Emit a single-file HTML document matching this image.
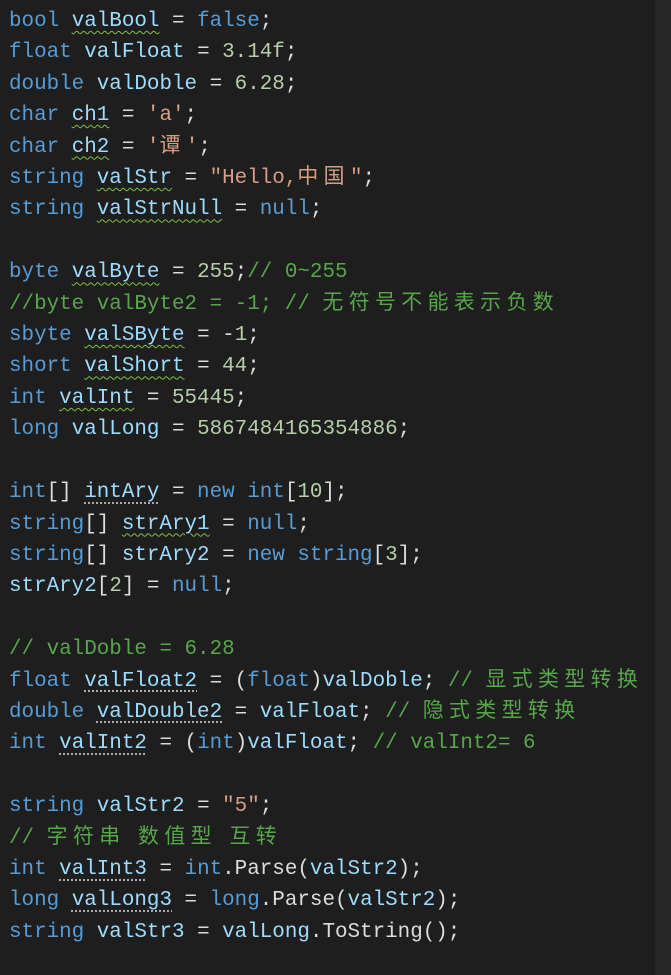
<!DOCTYPE html>
<html><head><meta charset="utf-8"><style>
html,body{margin:0;padding:0;background:#1e1e1e;width:671px;height:975px;overflow:hidden}
pre{position:absolute;left:9px;top:6px;margin:0;font-family:"Liberation Mono","Noto Sans CJK SC",monospace;font-size:20.9px;line-height:31.4px;color:#dcdcdc}
.k{color:#569cd6}.v{color:#9cdcfe}.s{color:#d69d85}.n{color:#b5cea8}.c{color:#57a64a}
.w{text-decoration:underline wavy #7fbf3f;text-decoration-thickness:1px;text-underline-offset:4px}
.d{text-decoration:underline dotted #aaa;text-underline-offset:5px}
.z{letter-spacing:5.4px}
.edge{position:absolute;right:0;top:0;width:16px;height:975px;background:#262626}
</style></head><body>
<div class="edge"></div>
<pre><span class="k">bool</span> <span class="v w">valBool</span> = <span class="k">false</span>;
<span class="k">float</span> <span class="v">valFloat</span> = <span class="n">3.14f</span>;
<span class="k">double</span> <span class="v">valDoble</span> = <span class="n">6.28</span>;
<span class="k">char</span> <span class="v w">ch1</span> = <span class="s">'a'</span>;
<span class="k">char</span> <span class="v w">ch2</span> = <span class="s">'<span class="z">谭</span>'</span>;
<span class="k">string</span> <span class="v w">valStr</span> = <span class="s">"Hello,<span class="z">中国</span>"</span>;
<span class="k">string</span> <span class="v w">valStrNull</span> = <span class="k">null</span>;

<span class="k">byte</span> <span class="v w">valByte</span> = <span class="n">255</span>;<span class="c">// 0~255</span>
<span class="c">//byte valByte2 = -1; // <span class="z">无符号不能表示负数</span></span>
<span class="k">sbyte</span> <span class="v w">valSByte</span> = -<span class="n">1</span>;
<span class="k">short</span> <span class="v w">valShort</span> = <span class="n">44</span>;
<span class="k">int</span> <span class="v w">valInt</span> = <span class="n">55445</span>;
<span class="k">long</span> <span class="v">valLong</span> = <span class="n">5867484165354886</span>;

<span class="k">int</span>[] <span class="v d">intAry</span> = <span class="k">new</span> <span class="k">int</span>[<span class="n">10</span>];
<span class="k">string</span>[] <span class="v w">strAry1</span> = <span class="k">null</span>;
<span class="k">string</span>[] <span class="v">strAry2</span> = <span class="k">new</span> <span class="k">string</span>[<span class="n">3</span>];
<span class="v">strAry2</span>[<span class="n">2</span>] = <span class="k">null</span>;

<span class="c">// valDoble = 6.28</span>
<span class="k">float</span> <span class="v d">valFloat2</span> = (<span class="k">float</span>)<span class="v">valDoble</span>; <span class="c">// <span class="z">显式类型转换</span></span>
<span class="k">double</span> <span class="v d">valDouble2</span> = <span class="v">valFloat</span>; <span class="c">// <span class="z">隐式类型转换</span></span>
<span class="k">int</span> <span class="v d">valInt2</span> = (<span class="k">int</span>)<span class="v">valFloat</span>; <span class="c">// valInt2= 6</span>

<span class="k">string</span> <span class="v">valStr2</span> = <span class="s">"5"</span>;
<span class="c">// <span class="z">字符串</span> <span class="z">数值型</span> <span class="z">互转</span></span>
<span class="k">int</span> <span class="v d">valInt3</span> = <span class="k">int</span>.Parse(<span class="v">valStr2</span>);
<span class="k">long</span> <span class="v d">valLong3</span> = <span class="k">long</span>.Parse(<span class="v">valStr2</span>);
<span class="k">string</span> <span class="v">valStr3</span> = <span class="v">valLong</span>.ToString();</pre>
</body></html>
